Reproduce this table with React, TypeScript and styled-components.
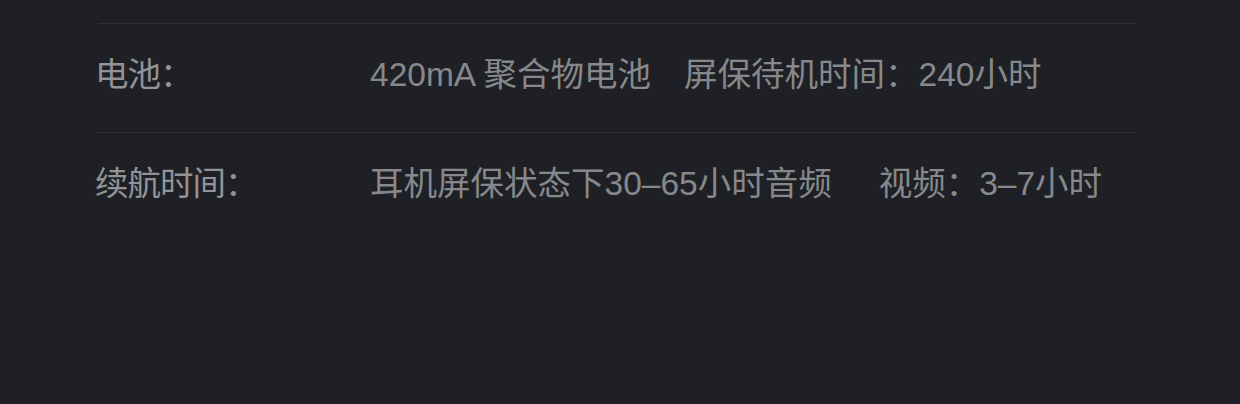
import React from 'react';
import styled, { createGlobalStyle } from 'styled-components';

interface Spec {
    label: string;
    parts: { text: string; gap: number }[];
}

const specs: Spec[] = [
    {
        label: '电池：',
        parts: [
            { text: '420mA 聚合物电池', gap: 0 },
            { text: '屏保待机时间：240小时', gap: 33 },
        ],
    },
    {
        label: '续航时间：',
        parts: [
            { text: '耳机屏保状态下30–65小时音频', gap: 0 },
            { text: '视频：3–7小时', gap: 47 },
        ],
    },
];

const GlobalStyle = createGlobalStyle`
  html, body {
    margin: 0;
    padding: 0;
    background: #1f2025;
  }
  body {
    font-family: "Liberation Sans", "Noto Sans CJK SC", sans-serif;
  }
`;

const SpecList = styled.div`
  width: 1240px;
  height: 404px;
  box-sizing: border-box;
  padding: 23px 0 0 95px;
  background: #1f2025;
`;

const Divider = styled.div`
  margin-left: 3px;
  width: 1038px;
  height: 1px;
  background: #303136;
`;

const SpecRow = styled.div`
  display: flex;
  align-items: center;
  height: 108px;
  box-sizing: border-box;
  padding-bottom: 6px;
  line-height: 1.2;
`;

const SpecLabel = styled.span`
  width: 275px;
  font-size: 33.5px;
  color: #929397;
  letter-spacing: -1px;
`;

const SpecValue = styled.div`
  display: flex;
  font-size: 33.5px;
  color: #87888c;
  white-space: pre;
`;

const Segment = styled.span<{ $gap: number }>`
  margin-left: ${p => p.$gap}px;
`;

const App: React.FC = () => {
    return (
        <>
            <GlobalStyle />
            <SpecList>
                {specs.map((spec, index) => (
                    <React.Fragment key={index}>
                        <Divider />
                        <SpecRow>
                            <SpecLabel>{spec.label}</SpecLabel>
                            <SpecValue>
                                {spec.parts.map((part, i) => (
                                    <Segment key={i} $gap={part.gap}>{part.text}</Segment>
                                ))}
                            </SpecValue>
                        </SpecRow>
                    </React.Fragment>
                ))}
            </SpecList>
        </>
    );
};

export default App;
